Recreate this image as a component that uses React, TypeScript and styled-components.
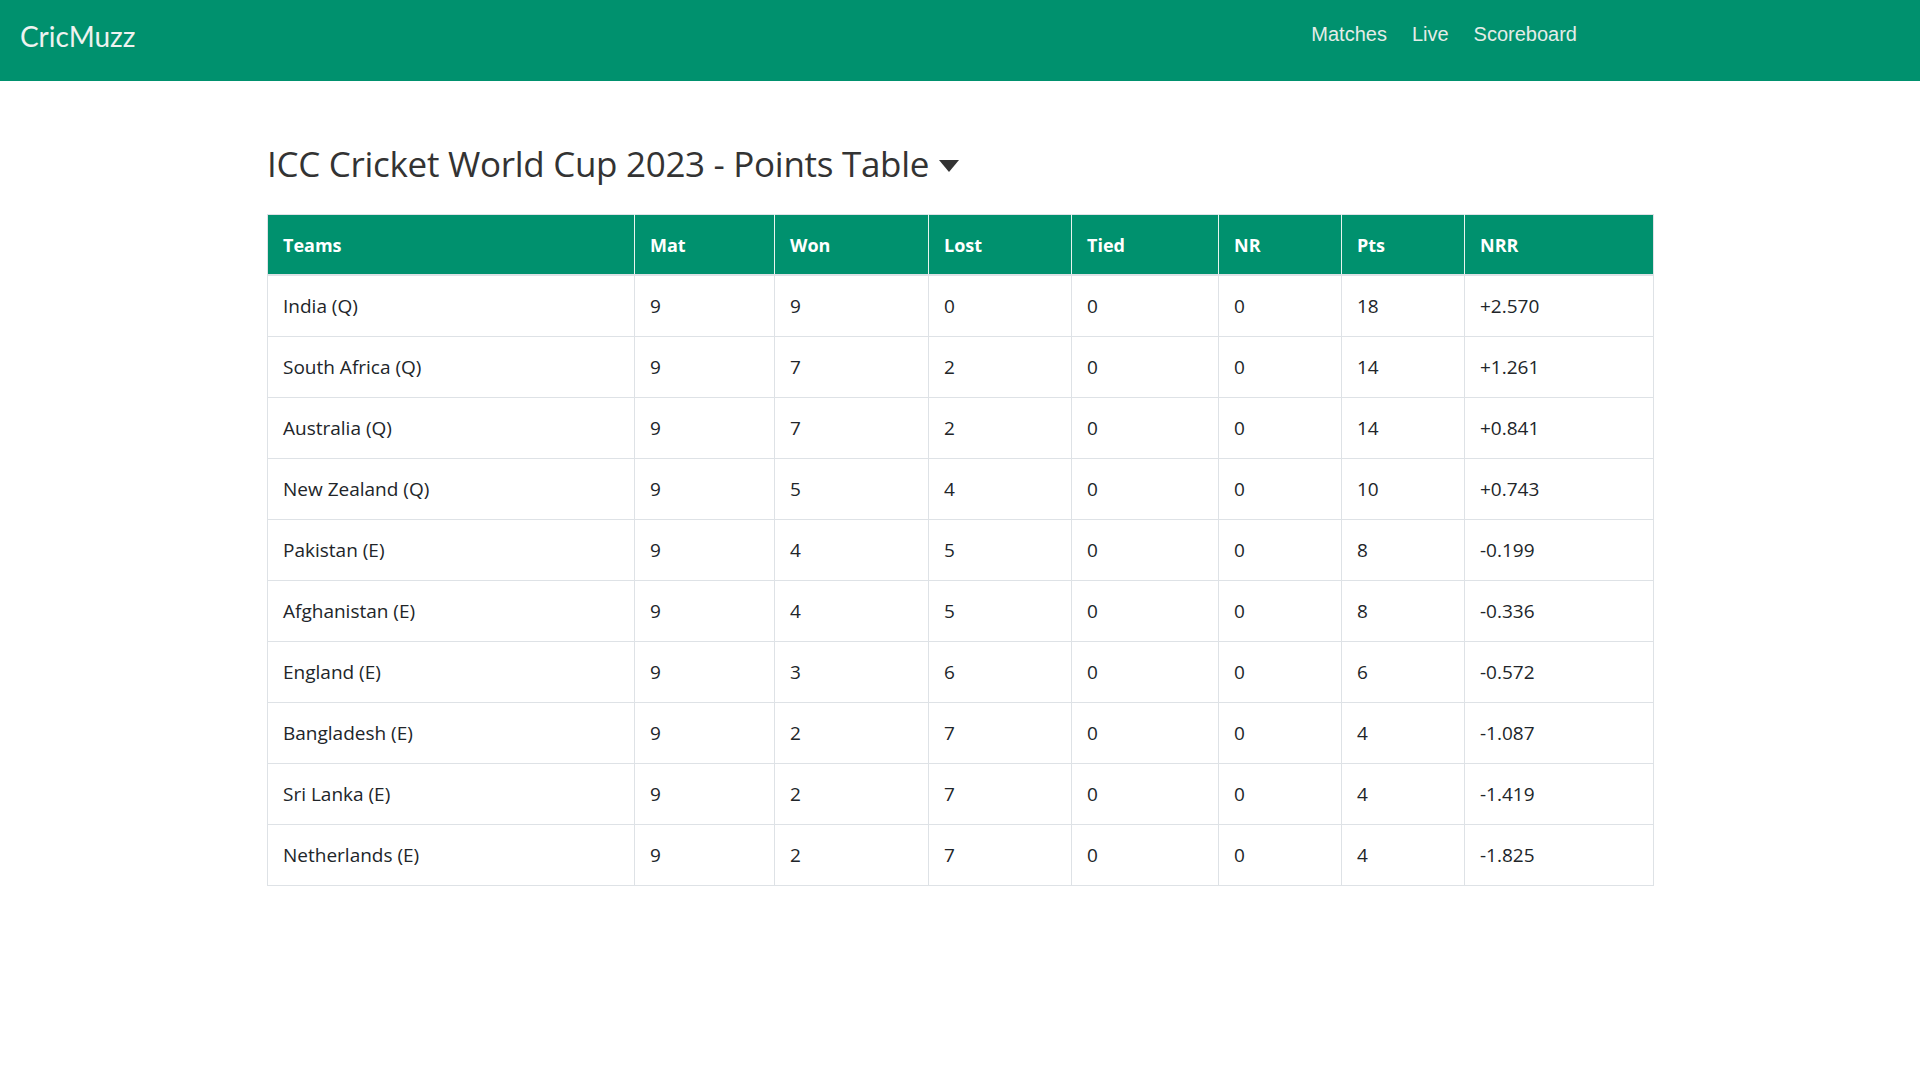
import styled, { createGlobalStyle } from "styled-components";

const GlobalStyle = createGlobalStyle`
  body {
    margin: 0;
    background: #ffffff;
    font-family: "Open Sans", "Noto Sans", sans-serif;
    color: #212529;
  }
`;

interface Team {
  name: string;
  mat: number;
  won: number;
  lost: number;
  tied: number;
  nr: number;
  pts: number;
  nrr: string;
}

const teams: Team[] = [
  { name: "India (Q)", mat: 9, won: 9, lost: 0, tied: 0, nr: 0, pts: 18, nrr: "+2.570" },
  { name: "South Africa (Q)", mat: 9, won: 7, lost: 2, tied: 0, nr: 0, pts: 14, nrr: "+1.261" },
  { name: "Australia (Q)", mat: 9, won: 7, lost: 2, tied: 0, nr: 0, pts: 14, nrr: "+0.841" },
  { name: "New Zealand (Q)", mat: 9, won: 5, lost: 4, tied: 0, nr: 0, pts: 10, nrr: "+0.743" },
  { name: "Pakistan (E)", mat: 9, won: 4, lost: 5, tied: 0, nr: 0, pts: 8, nrr: "-0.199" },
  { name: "Afghanistan (E)", mat: 9, won: 4, lost: 5, tied: 0, nr: 0, pts: 8, nrr: "-0.336" },
  { name: "England (E)", mat: 9, won: 3, lost: 6, tied: 0, nr: 0, pts: 6, nrr: "-0.572" },
  { name: "Bangladesh (E)", mat: 9, won: 2, lost: 7, tied: 0, nr: 0, pts: 4, nrr: "-1.087" },
  { name: "Sri Lanka (E)", mat: 9, won: 2, lost: 7, tied: 0, nr: 0, pts: 4, nrr: "-1.419" },
  { name: "Netherlands (E)", mat: 9, won: 2, lost: 7, tied: 0, nr: 0, pts: 4, nrr: "-1.825" },
];

const columns = [
  { label: "Teams", width: 367 },
  { label: "Mat", width: 140 },
  { label: "Won", width: 154 },
  { label: "Lost", width: 143 },
  { label: "Tied", width: 147 },
  { label: "NR", width: 123 },
  { label: "Pts", width: 123 },
  { label: "NRR", width: 189 },
];

const NavBar = styled.nav`
  height: 81px;
  background: #00916e;
  display: flex;
  align-items: center;
  justify-content: space-between;
  padding: 0 343px 0 20px;
  box-sizing: border-box;
`;

const Brand = styled.a`
  font-family: "Lato", "Open Sans", sans-serif;
  font-size: 28px;
  color: #eef2f0;
  text-decoration: none;
  margin-top: -10px;
`;

const NavLinks = styled.ul`
  display: flex;
  gap: 25px;
  list-style: none;
  margin: -12px 0 0 0;
  padding: 0;
`;

const NavLink = styled.a`
  font-family: "Liberation Sans", Arial, sans-serif;
  font-size: 20px;
  color: #e4ece8;
  text-decoration: none;
`;

const Main = styled.main`
  width: 1386px;
  margin: 0 auto;
  padding-top: 59px;
`;

const Title = styled.h1`
  display: flex;
  align-items: center;
  gap: 9px;
  margin: 0 0 27px 0;
  font-size: 35px;
  font-weight: 500;
  color: #333333;
  letter-spacing: -0.3px;
`;

const Caret = styled.svg`
  width: 22px;
  height: 14px;
  margin-top: 4px;
`;

const Table = styled.table`
  width: 100%;
  border-collapse: collapse;
  table-layout: fixed;
  border: 1px solid #dee2e6;
  font-size: 19px;
`;

const HeadCell = styled.th`
  background: #00916e;
  color: #ffffff;
  font-size: 18px;
  font-weight: 700;
  text-align: left;
  height: 59px;
  padding: 0 15px;
  border-left: 1px solid #e8f4ef;
  border-bottom: 2px solid #dee2e6;
  &:first-child {
    border-left: none;
  }
`;

const Cell = styled.td`
  height: 60px;
  padding: 0 15px;
  border-left: 1px solid #dee2e6;
  border-bottom: 1px solid #dee2e6;
  color: #212529;
  &:first-child {
    border-left: none;
  }
`;

export default function App() {
  return (
    <>
      <GlobalStyle />
      <NavBar>
        <Brand href="#">CricMuzz</Brand>
        <NavLinks>
          <li><NavLink href="#">Matches</NavLink></li>
          <li><NavLink href="#">Live</NavLink></li>
          <li><NavLink href="#">Scoreboard</NavLink></li>
        </NavLinks>
      </NavBar>
      <Main>
        <Title>
          ICC Cricket World Cup 2023 - Points Table
          <Caret viewBox="0 0 22 14">
            <path d="M1 1 L21 1 L11 13 Z" fill="#333333" />
          </Caret>
        </Title>
        <Table>
          <colgroup>
            {columns.map((c) => (
              <col key={c.label} style={{ width: c.width }} />
            ))}
          </colgroup>
          <thead>
            <tr>
              {columns.map((c) => (
                <HeadCell key={c.label}>{c.label}</HeadCell>
              ))}
            </tr>
          </thead>
          <tbody>
            {teams.map((t) => (
              <tr key={t.name}>
                <Cell>{t.name}</Cell>
                <Cell>{t.mat}</Cell>
                <Cell>{t.won}</Cell>
                <Cell>{t.lost}</Cell>
                <Cell>{t.tied}</Cell>
                <Cell>{t.nr}</Cell>
                <Cell>{t.pts}</Cell>
                <Cell>{t.nrr}</Cell>
              </tr>
            ))}
          </tbody>
        </Table>
      </Main>
    </>
  );
}
